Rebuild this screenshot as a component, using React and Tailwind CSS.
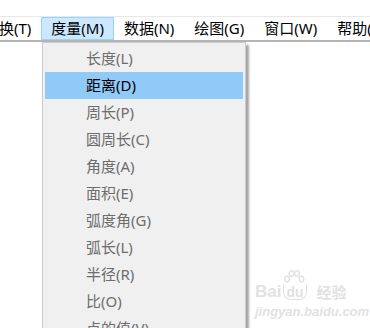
const menus = ['变换(T)', '度量(M)', '数据(N)', '绘图(G)', '窗口(W)', '帮助(H)']

const items = ['长度(L)', '距离(D)', '周长(P)', '圆周长(C)', '角度(A)', '面积(E)', '弧度角(G)', '弧长(L)', '半径(R)', '比(O)', '点的值(V)']

export default function App() {
    return (
        <div className="relative h-[328px] w-[370px] overflow-hidden bg-white text-[15px] leading-none" style={{ fontFamily: '"Noto Sans", "Noto Sans CJK SC", sans-serif' }}>
            <div className="h-[16px]" />
            <div className="-ml-[26px] flex h-[26px] items-stretch border-t border-b-2 border-t-[#e8e8e8] border-b-[#b4b4b4]">
                {menus.map((m, i) => (
                    <div
                        key={m}
                        className={
                            i === 1
                                ? 'flex items-center whitespace-nowrap border border-[#99d1ff] bg-[#cce8ff] px-[9px] text-black'
                                : 'flex items-center whitespace-nowrap border border-transparent px-[9px] text-black'
                        }
                    >
                        {m}
                    </div>
                ))}
            </div>

            <div className="absolute left-[42px] top-[42px] w-[204px] border border-[#cccccc] bg-[#f0f0f0] p-[2px] shadow-[3px_3px_2px_rgba(0,0,0,0.35)]">
                {items.map((t, i) => (
                    <div
                        key={t + i}
                        className={
                            i === 1
                                ? 'flex h-[27px] items-center bg-[#91c9f7] pl-[41px] text-black'
                                : 'flex h-[27px] items-center pl-[41px] text-[#6d6d6d]'
                        }
                    >
                        {t}
                    </div>
                ))}
            </div>

            <div className="absolute left-[255px] top-[283px] flex flex-col items-start text-[#e2e2e2]">
                <div className="flex items-end">
                    <span className="text-[17px] font-bold leading-none" style={{ fontFamily: '"Liberation Sans", sans-serif' }}>Bai</span>
                    <span className="relative ml-[2px] rounded-b-[8px] border-[1.5px] border-t-0 border-[#e2e2e2] px-[2px] text-[14px] font-bold leading-none" style={{ fontFamily: '"Liberation Sans", sans-serif' }}>
                        <svg className="absolute -top-[15px] left-[-1px]" width="22" height="15" viewBox="0 0 22 15" fill="none" stroke="#e2e2e2" strokeWidth="1.4">
                            <ellipse cx="4" cy="9" rx="2.3" ry="2.7" />
                            <ellipse cx="8.5" cy="3.5" rx="2.3" ry="2.7" />
                            <ellipse cx="14" cy="3.5" rx="2.3" ry="2.7" />
                            <ellipse cx="18.5" cy="9" rx="2.3" ry="2.7" />
                        </svg>
                        du
                    </span>
                    <span className="ml-[10px] text-[15px] font-bold leading-none">经验</span>
                </div>
                <span className="mt-[5px] text-[13px] font-bold italic leading-none" style={{ fontFamily: '"Liberation Sans", sans-serif' }}>jingyan.baidu.com</span>
            </div>
        </div>
    )
}
